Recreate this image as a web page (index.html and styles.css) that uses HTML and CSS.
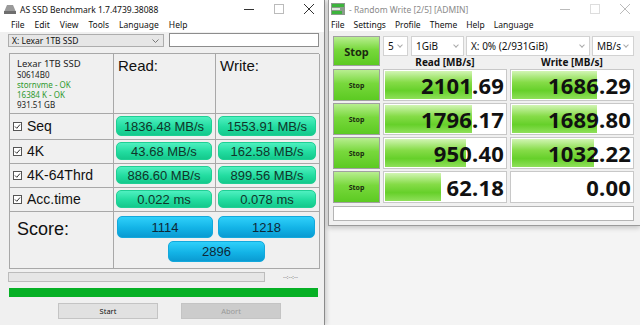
FILE: index.html
```html
<!DOCTYPE html>
<html lang="en">
<head>
    <meta charset="UTF-8">
    <title>AS SSD and CrystalDiskMark</title>
    <link rel="stylesheet" href="styles.css">
</head>
<body>
    <div class="asssd">
        <div class="titlebar">
            <svg class="app-icon" width="12" height="10" viewBox="0 0 12 10">
                <path d="M3 1h6l3 7H0z" fill="#9a9a9a"/>
                <rect x="0" y="7" width="12" height="3" fill="#6e6e6e"/>
            </svg>
            <span class="title">AS SSD Benchmark 1.7.4739.38088</span>
            <div class="controls">
                <span class="ctl"><svg width="10" height="10"><line x1="0" y1="5.5" x2="10" y2="5.5" stroke="#333"/></svg></span>
                <span class="ctl"><svg width="10" height="10"><rect x="0.5" y="0.5" width="9" height="9" fill="none" stroke="#bbb"/></svg></span>
                <span class="ctl"><svg width="10" height="10"><path d="M0 0L10 10M10 0L0 10" stroke="#333"/></svg></span>
            </div>
        </div>
        <nav class="menu">
            <span>File</span><span>Edit</span><span>View</span><span>Tools</span><span>Language</span><span>Help</span>
        </nav>
        <div class="toolbar">
            <div class="drive-select">
                <span>X: Lexar 1TB SSD</span>
                <svg width="7" height="4"><path d="M0.5 0.5L3.5 3.5L6.5 0.5" fill="none" stroke="#777"/></svg>
            </div>
            <div class="text-box"></div>
        </div>

        <div class="grid">
            <div class="cell info">
                <div class="drive-name">Lexar 1TB SSD</div>
                <div>S0614B0</div>
                <div class="ok">stornvme - OK</div>
                <div class="ok">16384 K - OK</div>
                <div>931.51 GB</div>
            </div>
            <div class="cell head">Read:</div>
            <div class="cell head">Write:</div>

            <div class="cell label"><svg class="check" width="9" height="9"><rect x="0.5" y="0.5" width="8" height="8" fill="#fff" stroke="#555"/><path d="M2 4.5L3.8 6.3L7 2.5" fill="none" stroke="#333"/></svg>Seq</div>
            <div class="cell"><div class="pill">1836.48 MB/s</div></div>
            <div class="cell"><div class="pill">1553.91 MB/s</div></div>

            <div class="cell label"><svg class="check" width="9" height="9"><rect x="0.5" y="0.5" width="8" height="8" fill="#fff" stroke="#555"/><path d="M2 4.5L3.8 6.3L7 2.5" fill="none" stroke="#333"/></svg>4K</div>
            <div class="cell"><div class="pill">43.68 MB/s</div></div>
            <div class="cell"><div class="pill">162.58 MB/s</div></div>

            <div class="cell label"><svg class="check" width="9" height="9"><rect x="0.5" y="0.5" width="8" height="8" fill="#fff" stroke="#555"/><path d="M2 4.5L3.8 6.3L7 2.5" fill="none" stroke="#333"/></svg>4K-64Thrd</div>
            <div class="cell"><div class="pill">886.60 MB/s</div></div>
            <div class="cell"><div class="pill">899.56 MB/s</div></div>

            <div class="cell label"><svg class="check" width="9" height="9"><rect x="0.5" y="0.5" width="8" height="8" fill="#fff" stroke="#555"/><path d="M2 4.5L3.8 6.3L7 2.5" fill="none" stroke="#333"/></svg>Acc.time</div>
            <div class="cell"><div class="pill">0.022 ms</div></div>
            <div class="cell"><div class="pill">0.078 ms</div></div>

            <div class="cell score-label">Score:</div>
            <div class="cell score">
                <div class="score-row">
                    <div class="pill blue">1114</div>
                    <div class="pill blue">1218</div>
                </div>
                <div class="pill blue total">2896</div>
            </div>
        </div>

        <div class="progress-row">
            <div class="progress"></div>
            <span class="time">--:--:--</span>
        </div>
        <div class="done-bar"></div>
        <div class="buttons">
            <div class="btn">Start</div>
            <div class="btn disabled">Abort</div>
        </div>
    </div>

    <div class="cdm">
        <div class="titlebar">
            <svg class="app-icon" width="14" height="12" viewBox="0 0 14 12">
                <rect x="0" y="0" width="14" height="12" fill="#8c9a8c"/>
                <rect x="1" y="1" width="12" height="3" fill="#3cb43c"/>
                <rect x="1" y="5" width="8" height="2" fill="#dfe8df"/>
                <rect x="1" y="8" width="10" height="3" fill="#3cb43c"/>
            </svg>
            <span class="title dim">- Random Write [2/5] [ADMIN]</span>
            <div class="controls">
                <span class="ctl"><svg width="10" height="10"><line x1="0" y1="5.5" x2="10" y2="5.5" stroke="#bbb"/></svg></span>
                <span class="ctl"><svg width="10" height="10"><rect x="0.5" y="0.5" width="9" height="9" fill="none" stroke="#ddd"/></svg></span>
                <span class="ctl"><svg width="10" height="10"><path d="M0 0L10 10M10 0L0 10" stroke="#bbb"/></svg></span>
            </div>
        </div>
        <nav class="menu cdm-menu">
            <span>File</span><span>Settings</span><span>Profile</span><span>Theme</span><span>Help</span><span>Language</span>
        </nav>
        <div class="cdm-body">
            <div class="top">
                <div class="stop big">Stop</div>
                <div class="top-right">
                    <div class="selects">
                        <div class="sel w-count">5<i></i></div>
                        <div class="sel w-size">1GiB<i></i></div>
                        <div class="sel w-drive">X: 0% (2/931GiB)<i></i></div>
                        <div class="sel w-unit">MB/s<i></i></div>
                    </div>
                    <div class="heads">
                        <span>Read [MB/s]</span>
                        <span>Write [MB/s]</span>
                    </div>
                </div>
            </div>
            <div class="row">
                <div class="stop">Stop</div>
                <div class="val"><div class="bar" style="width: 71%"></div><span>2101.69</span></div>
                <div class="val"><div class="bar" style="width: 70%"></div><span>1686.29</span></div>
            </div>
            <div class="row">
                <div class="stop">Stop</div>
                <div class="val"><div class="bar" style="width: 71%"></div><span>1796.17</span></div>
                <div class="val"><div class="bar" style="width: 70%"></div><span>1689.80</span></div>
            </div>
            <div class="row">
                <div class="stop">Stop</div>
                <div class="val"><div class="bar" style="width: 66%"></div><span>950.40</span></div>
                <div class="val"><div class="bar" style="width: 67%"></div><span>1032.22</span></div>
            </div>
            <div class="row">
                <div class="stop">Stop</div>
                <div class="val"><div class="bar" style="width: 46%"></div><span>62.18</span></div>
                <div class="val"><div class="bar" style="width: 0%"></div><span>0.00</span></div>
            </div>
            <div class="comment"></div>
        </div>
    </div>
</body>
</html>
```

FILE: styles.css
```css
* {
    margin: 0;
    padding: 0;
    box-sizing: border-box;
}
body {
    width: 640px;
    height: 325px;
    overflow: hidden;
    display: flex;
    align-items: flex-start;
    background: #f4f4f4;
    font-family: "Noto Sans", sans-serif;
    color: #111;
}

/* window chrome */
.titlebar {
    height: 18px;
    background: #fff;
    display: flex;
    align-items: center;
}
.app-icon {
    margin-left: 4px;
    margin-right: 4px;
}
.title {
    font-size: 8.5px;
}
.title.dim {
    color: #8a8a8a;
}
.controls {
    margin-left: auto;
    display: flex;
}
.ctl {
    width: 30px;
    display: flex;
    justify-content: center;
}
.menu {
    height: 14px;
    background: #fff;
    display: flex;
    gap: 10px;
    padding-left: 11px;
    font-size: 8.5px;
    line-height: 14px;
}

/* AS SSD */
.asssd {
    width: 325px;
    height: 325px;
    background: #f0f0f0;
    border-right: 1px solid #8a8a8a;
    box-shadow: 2px 0 4px rgba(0, 0, 0, 0.15);
    flex-shrink: 0;
}
.toolbar {
    display: flex;
    gap: 5px;
    padding: 2px 0 0 8px;
}
.drive-select {
    width: 156px;
    height: 13px;
    background: #e6e6e6;
    border: 1px solid #adadad;
    display: flex;
    align-items: center;
    justify-content: space-between;
    padding: 0 4px 0 3px;
    font-size: 8.5px;
}
.text-box {
    width: 150px;
    height: 14px;
    margin-top: -1px;
    background: #fff;
    border: 1px solid #8d8d8d;
}
.grid {
    margin: 6px 0 0 9px;
    width: 310px;
    display: grid;
    grid-template-columns: 104px 102px 104px;
    grid-template-rows: 60px 26px 24px 24px 24px 57px;
    border-top: 1px solid #a8a8a8;
    border-left: 1px solid #a8a8a8;
}
.cell {
    border-right: 1px solid #a8a8a8;
    border-bottom: 1px solid #a8a8a8;
    padding: 2px 3px 3px 2px;
}
.info {
    padding: 3px 0 0 7px;
    font-size: 8px;
    line-height: 10px;
    color: #222;
}
.info .drive-name {
    font-size: 9.5px;
    line-height: 13px;
}
.ok {
    color: #2f9a2f;
}
.head {
    font-family: "Liberation Sans", sans-serif;
    font-size: 15px;
    padding: 3px 0 0 4px;
}
.label {
    display: flex;
    align-items: center;
    font-family: "Liberation Sans", sans-serif;
    font-size: 14px;
    padding-left: 3px;
}
.check {
    margin-right: 5px;
}
.pill {
    height: 100%;
    border-radius: 5px;
    background: linear-gradient(#4ff0c0, #22dca0 55%, #14c98c);
    border: 1px solid #1fcf94;
    display: flex;
    align-items: center;
    justify-content: center;
    font-family: "Liberation Sans", sans-serif;
    font-size: 13px;
    color: #10352a;
}
.score-label {
    font-family: "Liberation Sans", sans-serif;
    font-size: 18px;
    padding: 7px 0 0 7px;
}
.score {
    grid-column: span 2;
    padding: 4px 3px 5px 3px;
    display: flex;
    flex-direction: column;
    gap: 3px;
}
.score-row {
    display: grid;
    grid-template-columns: 96px 97px;
    gap: 5px;
    height: 22px;
}
.pill.blue {
    background: linear-gradient(#2fd0fa, #13b3e6 55%, #0a9bd2);
    border: 1px solid #13a8dc;
    color: #0d2838;
}
.pill.total {
    width: 97px;
    height: 21px;
    align-self: center;
    flex: none;
}
.progress-row {
    display: flex;
    align-items: center;
    margin-top: 3px;
    padding-left: 8px;
}
.progress {
    width: 257px;
    height: 10px;
    background: #e6e6e6;
    border: 1px solid #bcbcbc;
}
.time {
    margin-left: 18px;
    font-size: 6px;
    color: #666;
}
.done-bar {
    margin: 6px 0 0 9px;
    width: 309px;
    height: 9px;
    background: #06b025;
}
.buttons {
    display: flex;
    gap: 23px;
    padding: 6px 0 0 58px;
}
.btn {
    width: 100px;
    height: 16px;
    background: #e1e1e1;
    border: 1px solid #c4c4c4;
    font-size: 7.5px;
    display: flex;
    align-items: center;
    justify-content: center;
}
.btn.disabled {
    background: #cccccc;
    color: #9a9a9a;
}

/* CrystalDiskMark */
.cdm {
    margin-left: 3px;
    width: 312px;
    height: 226px;
    background: #f0f0f0;
    border-left: 1px solid #9a9a9a;
    border-bottom: 1px solid #9a9a9a;
    box-shadow: 0 2px 5px rgba(0, 0, 0, 0.2);
    flex-shrink: 0;
}
.cdm .app-icon {
    margin-left: 2px;
}
.cdm-menu {
    height: 13px;
    line-height: 13px;
    padding-left: 2px;
    gap: 9px;
}
.cdm-body {
    padding: 5px 0 0 4px;
}
.top {
    display: flex;
    gap: 3px;
    height: 30px;
}
.stop {
    width: 47px;
    height: 32px;
    background: linear-gradient(#b8ee90, #78d83c 45%, #5cca22);
    border: 1px solid #a0a0a0;
    display: flex;
    align-items: center;
    justify-content: center;
    font-weight: bold;
    font-size: 7px;
    color: #1a2a10;
    flex: none;
}
.stop.big {
    height: 30px;
    font-size: 11px;
}
.top-right {
    width: 251px;
}
.selects {
    display: flex;
    gap: 2px;
    height: 20px;
}
.sel {
    height: 20px;
    background: #fff;
    border: 1px solid #d2d2d2;
    font-size: 10px;
    line-height: 18px;
    padding-left: 4px;
    position: relative;
}
.sel i {
    position: absolute;
    right: 5px;
    top: 6px;
    width: 4px;
    height: 4px;
    border-right: 1px solid #aaa;
    border-bottom: 1px solid #aaa;
    transform: rotate(45deg);
}
.w-count {
    width: 25px;
    margin-right: 1px;
}
.w-size {
    width: 53px;
}
.w-drive {
    width: 124px;
}
.w-unit {
    width: 42px;
}
.heads {
    display: flex;
    gap: 3px;
    height: 10px;
    font-size: 10px;
    font-weight: bold;
    line-height: 12px;
}
.heads span {
    width: 124px;
    text-align: center;
}
.row {
    display: flex;
    gap: 3px;
    margin-top: 2px;
}
.top + .row {
    margin-top: 3px;
}
.val {
    width: 124px;
    height: 32px;
    background: #fff;
    border: 1px solid #c8c8c8;
    position: relative;
    display: flex;
    align-items: center;
    justify-content: flex-end;
    padding-right: 2px;
}
.bar {
    position: absolute;
    left: 1px;
    top: 1px;
    bottom: 1px;
    background: linear-gradient(#d2f5b4, #86dc48 40%, #66d02a 70%, #8fe05a);
}
.val span {
    position: relative;
    font-size: 22px;
    font-weight: bold;
    color: #111;
    letter-spacing: 0.2px;
}
.comment {
    width: 301px;
    height: 15px;
    margin-top: 3px;
    background: #fff;
    border: 1px solid #b4b4b4;
}
```
